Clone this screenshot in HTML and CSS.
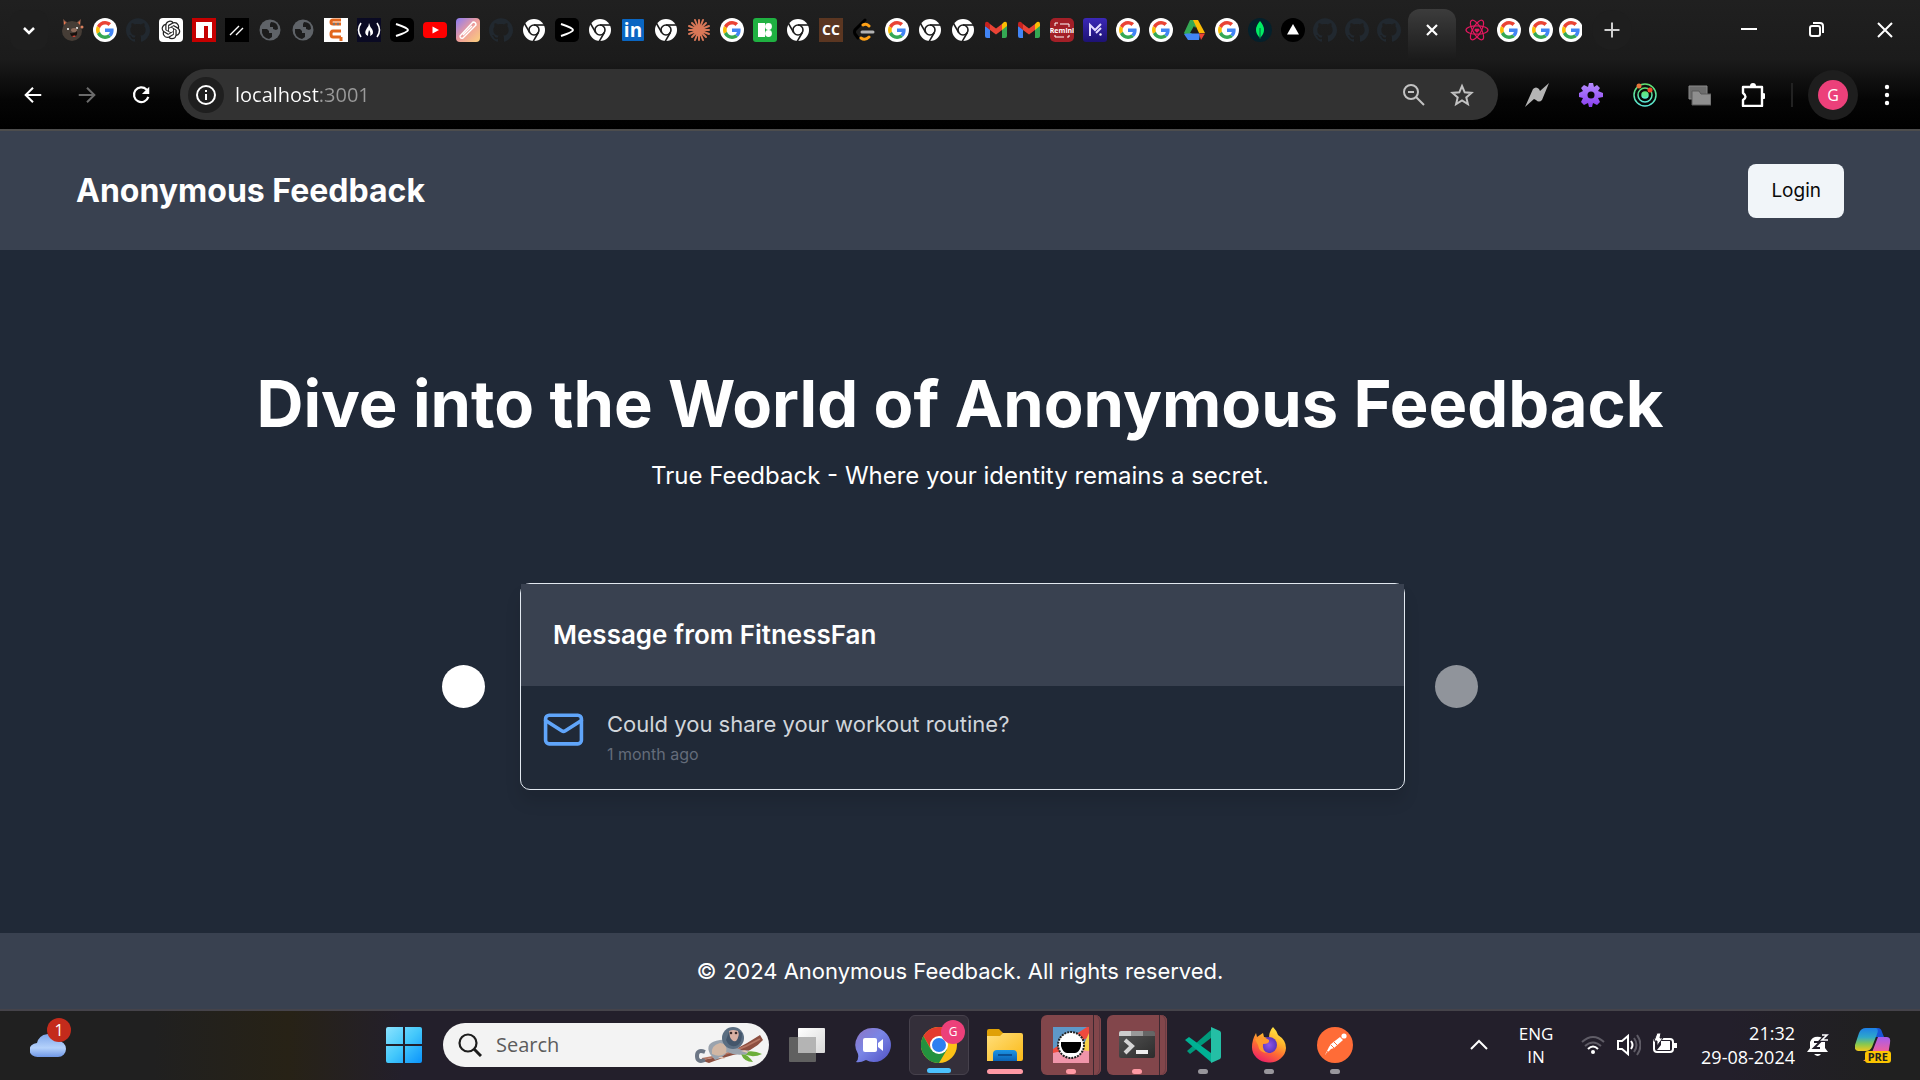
FILE: index.html
```html
<!DOCTYPE html>
<html lang="en">
<head>
<meta charset="utf-8">
<meta name="viewport" content="width=device-width, initial-scale=1">
<title>Anonymous Feedback</title>
<link rel="stylesheet" href="styles.css">
</head>
<body>
<svg class="sprite" aria-hidden="true">
  <defs>
    <linearGradient id="pen-bg" x1="0" y1="0" x2="1" y2="1"><stop offset="0" stop-color="#8a7bf5"/><stop offset=".5" stop-color="#ee9d9b"/><stop offset="1" stop-color="#fbd07c"/></linearGradient>
    <linearGradient id="m-bg" x1="0" y1="0" x2="0" y2="1"><stop offset="0" stop-color="#3b28b8"/><stop offset="1" stop-color="#1d1273"/></linearGradient>
    <linearGradient id="gear-bg" x1="0" y1="0" x2="0" y2="1"><stop offset="0" stop-color="#b68cff"/><stop offset="1" stop-color="#8a3ff0"/></linearGradient>
    <linearGradient id="radar" x1="0" y1="0" x2="0" y2="1"><stop offset="0" stop-color="#5fe070"/><stop offset="1" stop-color="#5ce6d8"/></linearGradient>
    <linearGradient id="win-bg" x1="0" y1="0" x2="1" y2="1"><stop offset="0" stop-color="#8be3ff"/><stop offset=".5" stop-color="#44c8fb"/><stop offset="1" stop-color="#0a93fb"/></linearGradient>
    <linearGradient id="cloud-bg" x1="0" y1="0" x2="0" y2="1"><stop offset="0" stop-color="#7ea6ea"/><stop offset=".6" stop-color="#b5d2fb"/><stop offset="1" stop-color="#6f97e6"/></linearGradient>
    <linearGradient id="chat-bg" x1="0" y1="0" x2="1" y2="1"><stop offset="0" stop-color="#8d74c4"/><stop offset=".45" stop-color="#7a86e6"/><stop offset="1" stop-color="#5050c4"/></linearGradient>
    <linearGradient id="folder-bg" x1="0" y1="0" x2="1" y2="1"><stop offset="0" stop-color="#ffdf7c"/><stop offset="1" stop-color="#fbb916"/></linearGradient>
    <linearGradient id="folder-blue" x1="0" y1="0" x2="0" y2="1"><stop offset="0" stop-color="#1b95e6"/><stop offset="1" stop-color="#0b62b4"/></linearGradient>
    <linearGradient id="term-bg" x1="0" y1="0" x2="1" y2="1"><stop offset="0" stop-color="#555"/><stop offset="1" stop-color="#2c2c2c"/></linearGradient>
    <linearGradient id="fox-bg" x1=".8" y1="0" x2=".3" y2="1"><stop offset="0" stop-color="#fff04a"/><stop offset=".35" stop-color="#ffb62c"/><stop offset=".65" stop-color="#ff6a34"/><stop offset="1" stop-color="#ec1e68"/></linearGradient>
    <radialGradient id="fox-orb"><stop offset="0" stop-color="#9058e8"/><stop offset="1" stop-color="#5a35bd"/></radialGradient>
    <linearGradient id="cop-a" x1="0" y1="0" x2="0" y2="1"><stop offset="0" stop-color="#1d7fe8"/><stop offset=".4" stop-color="#2fa8c9"/><stop offset=".7" stop-color="#86c850"/><stop offset="1" stop-color="#f2c81c"/></linearGradient>
    <linearGradient id="cop-b" x1="0" y1="0" x2="0" y2="1"><stop offset="0" stop-color="#a45cf0"/><stop offset=".6" stop-color="#f0609c"/><stop offset="1" stop-color="#ff8a5c"/></linearGradient>
    <linearGradient id="view-a" x1="0" y1="0" x2="1" y2="1"><stop offset="0" stop-color="#fff"/><stop offset="1" stop-color="#d8d8d8"/></linearGradient>
  </defs>
  <symbol id="g" viewBox="0 0 24 24"><circle cx="12" cy="12" r="12" fill="#fff"/><g transform="translate(3 3) scale(.375)"><path fill="#EA4335" d="M24 9.5c3.54 0 6.71 1.22 9.21 3.6l6.85-6.85C35.9 2.38 30.47 0 24 0 14.62 0 6.51 5.38 2.56 13.22l7.98 6.19C12.43 13.72 17.74 9.5 24 9.5z"/><path fill="#4285F4" d="M46.98 24.55c0-1.57-.15-3.09-.38-4.55H24v9.02h12.94c-.58 2.96-2.26 5.48-4.78 7.18l7.73 6c4.51-4.18 7.09-10.36 7.09-17.65z"/><path fill="#FBBC05" d="M10.53 28.59c-.48-1.45-.76-2.99-.76-4.59s.27-3.14.76-4.59l-7.98-6.19C.92 16.46 0 20.12 0 24c0 3.88.92 7.54 2.56 10.78l7.97-6.19z"/><path fill="#34A853" d="M24 48c6.48 0 11.93-2.13 15.89-5.81l-7.73-6c-2.15 1.45-4.92 2.3-8.16 2.3-6.26 0-11.57-4.22-13.47-9.91l-7.98 6.19C6.51 42.62 14.62 48 24 48z"/></g></symbol>
  <symbol id="gh" viewBox="0 0 24 24"><path fill="#21282f" d="M12 .297c-6.63 0-12 5.373-12 12 0 5.303 3.438 9.8 8.205 11.385.6.113.82-.258.82-.577 0-.285-.01-1.04-.015-2.04-3.338.724-4.042-1.61-4.042-1.61C4.422 18.07 3.633 17.7 3.633 17.7c-1.087-.744.084-.729.084-.729 1.205.084 1.838 1.236 1.838 1.236 1.07 1.835 2.809 1.305 3.495.998.108-.776.417-1.305.76-1.605-2.665-.3-5.466-1.332-5.466-5.93 0-1.31.465-2.38 1.235-3.22-.135-.303-.54-1.523.105-3.176 0 0 1.005-.322 3.3 1.23.96-.267 1.98-.399 3-.405 1.02.006 2.04.138 3 .405 2.28-1.552 3.285-1.23 3.285-1.23.645 1.653.24 2.873.12 3.176.765.84 1.23 1.91 1.23 3.22 0 4.61-2.805 5.625-5.475 5.92.42.36.81 1.096.81 2.22 0 1.606-.015 2.896-.015 3.286 0 .315.21.69.825.57C20.565 22.092 24 17.592 24 12.297c0-6.627-5.373-12-12-12"/></symbol>
  <symbol id="cr" viewBox="0 0 24 24"><circle cx="12" cy="12" r="11" fill="#fff"/><circle cx="12" cy="12" r="5" fill="none" stroke="#1c1c1c" stroke-width="1.600"/><g stroke="#1c1c1c" stroke-width="1.600"><path d="M12 7h11"/><path d="M12 7h11" transform="rotate(120 12 12)"/><path d="M12 7h11" transform="rotate(240 12 12)"/></g></symbol>
  <symbol id="bear" viewBox="0 0 24 24"><path d="M3 1l5 4-4 5zM21 1l-5 4 4 5z" fill="#7a5344"/><path d="M4 3l2 2-2 2zM20 3l-2 2 2 2z" fill="#e8764f"/><circle cx="12" cy="13" r="10" fill="#463d36"/><circle cx="8" cy="11" r="1" fill="#fff"/><circle cx="17" cy="10" r="1" fill="#fff"/><ellipse cx="14" cy="12" rx="3" ry="2" fill="#8c6a5a"/><path d="M10 15q5 1 7-2 1 5-3 6-3 0-4-4z" fill="#17100d"/><path d="M12 18q3-1 4 0-2 2-4 0z" fill="#e04a3b"/><circle cx="22" cy="9" r="1.5" fill="#d9805e"/></symbol>
  <symbol id="oa" viewBox="0 0 24 24"><rect width="24" height="24" rx="4" fill="#fff"/><path transform="translate(2.6 2.6) scale(.78)" fill="#222" d="M22.2819 9.8211a5.9847 5.9847 0 0 0-.5157-4.9108 6.0462 6.0462 0 0 0-6.5098-2.9A6.0651 6.0651 0 0 0 4.9807 4.1818a5.9847 5.9847 0 0 0-3.9977 2.9 6.0462 6.0462 0 0 0 .7427 7.0966 5.98 5.98 0 0 0 .511 4.9107 6.051 6.051 0 0 0 6.5146 2.9001A5.9847 5.9847 0 0 0 13.2599 24a6.0557 6.0557 0 0 0 5.7718-4.2058 5.9894 5.9894 0 0 0 3.9977-2.9001 6.0557 6.0557 0 0 0-.7475-7.0729zm-9.022 12.6081a4.4755 4.4755 0 0 1-2.8764-1.0408l.1419-.0804 4.7783-2.7582a.7948.7948 0 0 0 .3927-.6813v-6.7369l2.02 1.1686a.071.071 0 0 1 .038.052v5.5826a4.504 4.504 0 0 1-4.4945 4.4944zm-9.6607-4.1254a4.4708 4.4708 0 0 1-.5346-3.0137l.142.0852 4.783 2.7582a.7712.7712 0 0 0 .7806 0l5.8428-3.3685v2.3324a.0804.0804 0 0 1-.0332.0615L9.74 19.9502a4.4992 4.4992 0 0 1-6.1408-1.6464zM2.3408 7.8956a4.485 4.485 0 0 1 2.3655-1.9728V11.6a.7664.7664 0 0 0 .3879.6765l5.8144 3.3543-2.0201 1.1685a.0757.0757 0 0 1-.071 0l-4.8303-2.7865A4.504 4.504 0 0 1 2.3408 7.872zm16.5963 3.8558L13.1038 8.364 15.1192 7.2a.0757.0757 0 0 1 .071 0l4.8303 2.7913a4.4944 4.4944 0 0 1-.6765 8.1042v-5.6772a.79.79 0 0 0-.407-.667zm2.0107-3.0231l-.142-.0852-4.7735-2.7818a.7759.7759 0 0 0-.7854 0L9.409 9.2297V6.8974a.0662.0662 0 0 1 .0284-.0615l4.8303-2.7866a4.4992 4.4992 0 0 1 6.6802 4.66zM8.3065 12.863l-2.02-1.1638a.0804.0804 0 0 1-.038-.0567V6.0742a4.4992 4.4992 0 0 1 7.3757-3.4537l-.142.0805L8.704 5.459a.7948.7948 0 0 0-.3927.6813zm1.0976-2.3654l2.602-1.4998 2.6069 1.4998v2.9994l-2.5974 1.4997-2.6067-1.4997Z"/></symbol>
  <symbol id="npm" viewBox="0 0 24 24"><path fill="#c60000" d="M0 0h24v24H0z"/><path fill="#fff" d="M4 4h16v16h-4V8h-4v12H4z"/></symbol>
  <symbol id="slash" viewBox="0 0 24 24"><path d="M0 0h24v24H0z"/><path d="M5 17L14 8M11 17l7-7" stroke="#fff" stroke-width="1.4"/></symbol>
  <symbol id="globe" viewBox="0 0 24 24"><circle cx="12" cy="12" r="10.5" fill="#5f6368"/><path fill="#1c1c1c" d="M4 11h5l2 2v2h3v4l-3 2Q3 19 4 11zM13 4q7 0 7 7l-2 1-3-1V9h-3V6z"/></symbol>
  <symbol id="uc" viewBox="0 0 24 24"><path fill="#fff" d="M0 0h24v24H0z"/><path d="M17 2H9q-2 0-2 2t2 2h8M17 13H9q-2 0-2 3t2 3h8M17 19v4" fill="none" stroke="#e2661c" stroke-width="3"/><circle cx="10" cy="6" r="1.2" fill="#777"/><circle cx="14" cy="6" r="1.2" fill="#777"/></symbol>
  <symbol id="fcc" viewBox="0 0 24 24"><path fill="#0a0a23" d="M0 0h24v24H0z"/><path d="M4 5q-5 7 0 14M20 5q5 7 0 14" fill="none" stroke="#fff" stroke-width="1.6"/><path fill="#fff" d="M12 5q1 4 3 6 3 5-2 7 1-4-1-6-1 3-1 6-5-2-1-8 2-2 2-5z"/></symbol>
  <symbol id="gt" viewBox="0 0 24 24"><rect width="24" height="24" rx="5"/><path d="M6 6q12 4 12 6T6 18" fill="none" stroke="#fff" stroke-width="2"/></symbol>
  <symbol id="yt" viewBox="0 0 24 24"><rect y="4" width="24" height="16" rx="4" fill="#f00"/><path fill="#fff" d="M9.500 8.500L16 12l-6.500 3.500z"/></symbol>
  <symbol id="pen" viewBox="0 0 24 24"><rect width="24" height="24" rx="4" fill="url(#pen-bg)"/><path d="M4 18L17 4q3 0 3 3L7 20q-3 1-3-2zM7 17l9-9" fill="none" stroke="#fff" stroke-width="1.400" stroke-linejoin="round"/></symbol>
  <symbol id="claude" viewBox="0 0 24 24"><g stroke="#d97757" stroke-width="2" stroke-linecap="round"><path d="M12 2v20M2 12h20M5 5l14 14M19 5L5 19M8 2l8 20M16 2L8 22M2 8l20 8M2 16l20-8"/></g></symbol>
  <symbol id="green" viewBox="0 0 24 24"><rect width="24" height="24" rx="3" fill="#1fb141"/><path fill="#fff" d="M5 5h7v14H5z"/><circle cx="15.500" cy="8.500" r="3.400" fill="#fff"/><circle cx="15.500" cy="15.500" r="3.400" fill="#fff"/></symbol>
  <symbol id="lc" viewBox="0 0 24 24"><g fill="none" stroke-width="3" stroke-linecap="round"><path stroke="#000" d="M13 2L3 12q-1 2 0 4l3 4"/><path stroke="#ffa116" d="M11 7q3-2 6 1M9 20q4 3 8-1"/><path stroke="#b3b3b3" d="M10 14h11"/></g></symbol>
  <symbol id="gm" viewBox="0 0 24 24"><path fill="#4285f4" d="M1 8v10q0 2 2 2h3V11z"/><path fill="#34a853" d="M18 11v9h3q2 0 2-2V7z"/><path fill="#ea4335" d="M6 6l6 4.500L18 6v6l-6 4.500L6 12z"/><path fill="#c5221f" d="M1 6q0-3 3-2l2 2v6L1 8z"/><path fill="#fbbc04" d="M18 6l2-2q3-1 3 2v2l-5 4z"/></symbol>
  <symbol id="ml" viewBox="0 0 24 24"><rect width="24" height="24" rx="3" fill="url(#m-bg)"/><path d="M7 18V7l5 5 6-6M13 15l5-5" fill="none" stroke="#e4dcff" stroke-width="2"/><circle cx="17.500" cy="16.500" r="1.200" fill="#fff"/></symbol>
  <symbol id="drive" viewBox="0 0 24 24"><path fill="#34a853" d="M8 2h4l3 5L6 21l-4-6z"/><path fill="#fbbc04" d="M11 2h5l7 13h-6z"/><path fill="#4285f4" d="M5 15.500h13L17 22H6l-4-6z"/><path fill="#ea4335" d="M17 15.500h6L19 22z"/><path fill="#1c1c1c" d="M12 8l4 7H8z"/></symbol>
  <symbol id="mongo" viewBox="0 0 24 24"><circle cx="12" cy="12" r="12" fill="#04202b"/><path fill="#00ed64" d="M12 3q8 9 0 17Q4 12 12 3z"/><path d="M12 10v11" stroke="#04603f"/></symbol>
  <symbol id="tri" viewBox="0 0 24 24"><circle cx="12" cy="12" r="12"/><path fill="#fff" d="M12 6l6 10.500H6z"/></symbol>
  <symbol id="react" viewBox="0 0 24 24"><g fill="none" stroke="#e3175f" stroke-width="1.200"><ellipse cx="12" cy="12" rx="11" ry="4.200"/><ellipse cx="12" cy="12" rx="11" ry="4.200" transform="rotate(60 12 12)"/><ellipse cx="12" cy="12" rx="11" ry="4.200" transform="rotate(120 12 12)"/><path fill="#e3175f" d="M12 14l-2-2 1-1 1 1 1-1 1 1z"/></g></symbol>
</svg>

<header class="browser">
  <div class="strip">
    <button class="tab-search" aria-label="Search tabs"><svg viewBox="0 0 24 24" class="i24"><path d="M7 10l5 5 5-5" fill="none" stroke="#fff" stroke-width="2.500"/></svg></button>
    <nav class="tabs" aria-label="Tabs">
      <a class="tab" href="#"><svg><use href="#bear"/></svg></a>
      <a class="tab" href="#"><svg><use href="#g"/></svg></a>
      <a class="tab" href="#"><svg><use href="#gh"/></svg></a>
      <a class="tab" href="#"><svg><use href="#oa"/></svg></a>
      <a class="tab" href="#"><svg><use href="#npm"/></svg></a>
      <a class="tab" href="#"><svg><use href="#slash"/></svg></a>
      <a class="tab" href="#"><svg><use href="#globe"/></svg></a>
      <a class="tab" href="#"><svg><use href="#globe"/></svg></a>
      <a class="tab" href="#"><svg><use href="#uc"/></svg></a>
      <a class="tab" href="#"><svg><use href="#fcc"/></svg></a>
      <a class="tab" href="#"><svg><use href="#gt"/></svg></a>
      <a class="tab" href="#"><svg><use href="#yt"/></svg></a>
      <a class="tab" href="#"><svg><use href="#pen"/></svg></a>
      <a class="tab" href="#"><svg><use href="#gh"/></svg></a>
      <a class="tab" href="#"><svg><use href="#cr"/></svg></a>
      <a class="tab" href="#"><svg><use href="#gt"/></svg></a>
      <a class="tab" href="#"><svg><use href="#cr"/></svg></a>
      <a class="tab" href="#"><svg viewBox="0 0 24 24"><rect x="1" y="1" width="22" height="22" rx="1" fill="#0a66c2"/><text x="12" y="19" text-anchor="middle" font-size="19" font-weight="700" fill="#fff">in</text></svg></a>
      <a class="tab" href="#"><svg><use href="#cr"/></svg></a>
      <a class="tab" href="#"><svg><use href="#claude"/></svg></a>
      <a class="tab" href="#"><svg><use href="#g"/></svg></a>
      <a class="tab" href="#"><svg><use href="#green"/></svg></a>
      <a class="tab" href="#"><svg><use href="#cr"/></svg></a>
      <a class="tab" href="#"><svg viewBox="0 0 24 24"><path fill="#5b3621" d="M0 0h24v24H0z"/><text x="12" y="17" text-anchor="middle" font-size="14" font-weight="700" fill="#fff">CC</text></svg></a>
      <a class="tab" href="#"><svg><use href="#lc"/></svg></a>
      <a class="tab" href="#"><svg><use href="#g"/></svg></a>
      <a class="tab" href="#"><svg><use href="#cr"/></svg></a>
      <a class="tab" href="#"><svg><use href="#cr"/></svg></a>
      <a class="tab" href="#"><svg><use href="#gm"/></svg></a>
      <a class="tab" href="#"><svg><use href="#gm"/></svg></a>
      <a class="tab" href="#"><svg viewBox="0 0 24 24"><rect width="24" height="24" rx="5" fill="#a31f27"/><path d="M5 8V5h3M10 6h9v3M5 17v2h9M17 19h2v-2" fill="none" stroke="#fff"/><text x="12" y="15" text-anchor="middle" font-size="7" font-weight="700" fill="#fff">Remini</text></svg></a>
      <a class="tab" href="#"><svg><use href="#ml"/></svg></a>
      <a class="tab" href="#"><svg><use href="#g"/></svg></a>
      <a class="tab" href="#"><svg><use href="#g"/></svg></a>
      <a class="tab" href="#"><svg><use href="#drive"/></svg></a>
      <a class="tab" href="#"><svg><use href="#g"/></svg></a>
      <a class="tab" href="#"><svg><use href="#mongo"/></svg></a>
      <a class="tab" href="#"><svg><use href="#tri"/></svg></a>
      <a class="tab tab-near" href="#"><svg><use href="#gh"/></svg></a>
      <a class="tab tab-near" href="#"><svg><use href="#gh"/></svg></a>
      <a class="tab tab-near" href="#"><svg><use href="#gh"/></svg></a>
      <button class="tab-active" aria-label="Close tab"><svg viewBox="0 0 24 24" class="i24"><path d="M7 7l10 10M17 7L7 17" stroke="#fff" stroke-width="2.200"/></svg></button>
      <a class="tab tab-near" href="#"><svg><use href="#react"/></svg></a>
      <a class="tab tab-near" href="#"><svg><use href="#g"/></svg></a>
      <a class="tab tab-near" href="#"><svg><use href="#g"/></svg></a>
      <a class="tab tab-cut" href="#"><svg><use href="#g"/></svg></a>
    </nav>
    <button class="new-tab" aria-label="New tab"><svg viewBox="0 0 24 24" class="i24"><path d="M12 3v18M3 12h18" stroke="#d0d0d0" stroke-width="2.400"/></svg></button>
    <div class="win">
      <button aria-label="Minimise"><svg viewBox="0 0 24 24" class="i24"><path d="M4 11h16" stroke="#fff" stroke-width="2"/></svg></button>
      <button aria-label="Restore"><svg viewBox="0 0 24 24" class="i24" fill="none" stroke="#fff" stroke-width="2"><rect x="5" y="8" width="10" height="10" rx="2"/><path d="M8 5h7q3 0 3 3v7"/></svg></button>
      <button aria-label="Close"><svg viewBox="0 0 24 24" class="i24"><path d="M5 5l14 14M19 5L5 19" stroke="#fff" stroke-width="2"/></svg></button>
    </div>
  </div>
  <div class="toolbar">
    <div class="nav">
      <button aria-label="Back"><svg viewBox="0 0 24 24" class="i24"><path d="M21 12H4M12 4l-8 8 8 8" fill="none" stroke="#fff" stroke-width="2.200"/></svg></button>
      <button aria-label="Forward"><svg viewBox="0 0 24 24" class="i24"><path d="M3 12h17M12 4l8 8-8 8" fill="none" stroke="#6b6b6b" stroke-width="2.200"/></svg></button>
      <button aria-label="Reload"><svg viewBox="0 0 24 24" class="i24"><path d="M20 14a8 8 0 1 1-2-8l2 2" fill="none" stroke="#fff" stroke-width="2.400"/><path d="M21 3v8h-8z" fill="#fff"/></svg></button>
    </div>
    <div class="omnibox">
      <button class="site-info" aria-label="Site information"><svg viewBox="0 0 24 24" class="i24"><circle cx="12" cy="12" r="9" fill="none" stroke="#fff" stroke-width="2"/><path d="M12 11v6M12 7v2" stroke="#fff" stroke-width="2"/></svg></button>
      <input class="url" type="text" value="localhost:3001" aria-label="Address">
      <button aria-label="Zoom"><svg viewBox="0 0 24 24" class="i24" fill="none" stroke="#c2c2c2" stroke-width="2"><circle cx="9" cy="9" r="7"/><path d="M14 14l8 8M6 9h6"/></svg></button>
      <button aria-label="Bookmark"><svg viewBox="0 0 24 24" class="i24"><path d="M12 3l2.700 6.300 6.800.6-5.200 4.500 1.600 6.700L12 17.500l-5.900 3.600 1.600-6.700L2.500 9.900l6.800-.6z" fill="none" stroke="#c2c2c2" stroke-width="2"/></svg></button>
    </div>
    <div class="exts">
      <button aria-label="Extension"><svg viewBox="0 0 24 24" class="i24"><path fill="#b4b4b4" d="M0 24L8 6q3-3 6 0l1 2 9-8-7 17q-3 3-6 0l-2-1z"/></svg></button>
      <button aria-label="Settings extension"><svg viewBox="0 0 24 24" class="i24"><g fill="url(#gear-bg)"><path d="M10 0h4l1 4 3-2 3 3-2 3 5 2v4l-5 1 2 4-3 3-4-2-1 4h-3l-1-4-4 2-3-3 2-4-4-1v-4l4-2-2-3 3-3 4 2z"/></g><circle cx="12" cy="12" r="3.500" fill="#080808"/></svg></button>
      <button aria-label="Radar extension"><svg viewBox="0 0 24 24" class="i24" fill="none" stroke="url(#radar)" stroke-width="1.500"><circle cx="12" cy="12" r="11"/><circle cx="12" cy="12" r="7"/><circle cx="12" cy="12" r="3" fill="#5ee68c"/><circle cx="6" cy="3" r="2.500" fill="#e8763a" stroke="none"/><circle cx="17" cy="7" r="2.500" fill="#ee4b2b" stroke="none"/></svg></button>
      <button aria-label="Windows extension"><svg viewBox="0 0 24 24" class="i24"><path fill="#6d6d6d" stroke="#8a8a8a" d="M2 3h18v13H2z"/><path fill="#8e8e8e" stroke="#5a5a5a" d="M5 8h7l2 3h10v11H5z"/></svg></button>
      <button aria-label="Extensions"><svg viewBox="0 0 24 24" class="i24"><path d="M2 4h19v19H2v-6q5-3 0-7z" fill="none" stroke="#fff" stroke-width="2.400" stroke-linejoin="round"/><path d="M9 3a3 3 0 0 1 6 0zM22 10a3 3 0 0 1 0 6z" fill="#fff"/></svg></button>
    </div>
    <span class="bar-sep"></span>
    <button class="profile" aria-label="Profile"><span>G</span></button>
    <button class="menu" aria-label="Menu"><svg viewBox="0 0 24 24" class="i24" fill="#fff"><circle cx="12" cy="4" r="2.200"/><circle cx="12" cy="12" r="2.200"/><circle cx="12" cy="20" r="2.200"/></svg></button>
  </div>
</header>

<div class="page">
  <header class="site-header">
    <a class="brand" href="#">Anonymous Feedback</a>
    <button class="login">Login</button>
  </header>
  <main class="hero">
    <h1>Dive into the World of Anonymous Feedback</h1>
    <p class="lead">True Feedback - Where your identity remains a secret.</p>
    <section class="carousel" aria-label="Messages">
      <button class="dot" aria-label="Previous message"></button>
      <div class="slide">
        <article class="card">
          <h2>Message from FitnessFan</h2>
          <div class="card-body">
            <svg class="mail" viewBox="0 0 24 24" fill="none" stroke="#60a5fa" stroke-width="2" stroke-linecap="round" stroke-linejoin="round"><rect width="20" height="16" x="2" y="4" rx="2"/><path d="M22 7l-8.970 5.700a1.940 1.940 0 0 1-2.060 0L2 7"/></svg>
            <div>
              <p class="msg">Could you share your workout routine?</p>
              <p class="ago">1 month ago</p>
            </div>
          </div>
        </article>
      </div>
      <button class="dot dot-off" aria-label="Next message" disabled></button>
    </section>
  </main>
  <footer class="site-footer">© 2024 Anonymous Feedback. All rights reserved.</footer>
</div>

<footer class="taskbar">
  <div class="widgets">
    <button class="weather" aria-label="Weather"><svg viewBox="0 0 36 26" width="36" height="26"><path fill="url(#cloud-bg)" d="M8 25a8 7 0 0 1-1-14A11 11 0 0 1 28 9a8 8 0 0 1 0 16z"/></svg><span class="count">1</span></button>
  </div>
  <div class="apps">
    <button class="start" aria-label="Start"><svg viewBox="0 0 36 36" width="36" height="36"><g fill="url(#win-bg)"><path d="M2 0h15v17H0V2q0-2 2-2zM19 0h15q2 0 2 2v15H19zM0 19h17v17H2q-2 0-2-2zM19 19h17v15q0 2-2 2H19z"/></g></svg></button>
    <label class="search">
      <svg viewBox="0 0 24 24" width="24" height="24" fill="none" stroke="#1d1d1d" stroke-width="2.200"><circle cx="10" cy="10" r="8.500"/><path d="M16 16l7 7" stroke-width="3"/></svg>
      <input type="search" placeholder="Search" aria-label="Search">
      <svg viewBox="0 0 70 38" width="70" height="38"><path d="M6 34q20-2 34-10 14-7 26-15l3 5q-10 12-30 15-14 4-24 8z" fill="#8d4f40"/><path d="M8 33q30-4 58-20" stroke="#b57663" stroke-width="2" fill="none"/><path d="M47 28q6-1 12 8-9 0-12-8zM48 27q10-4 20 1-10 5-20-1z" fill="#6cae3a"/><path d="M11 26q-8-3-8 4t8 4" fill="none" stroke="#6c7685" stroke-width="4"/><path d="M16 28q-6-12 10-14 8-1 12 4 8 8 16 6l-1 4q-12 2-20-2-4 6-12 8z" fill="#9aa3ae"/><path d="M18 28q-2-8 8-11 8 0 6 10-6 5-14 1z" fill="#d2b7a4"/><circle cx="39" cy="12" r="11" fill="#5b6e82"/><path d="M32 14q4 9 12 5 4-3 4-12-6-5-13-1z" fill="#44566b"/><path d="M35 5q4-2 9 0 2 5-2 10-4 1-6-4z" fill="#d9b0a3"/><circle cx="37" cy="7" r="1.300" fill="#3b2a2a"/><circle cx="42" cy="7" r="1.300" fill="#3b2a2a"/><path d="M24 32q4-3 7 1zM47 25q6-2 7 2z" fill="#e8c7b6"/></svg>
    </label>
    <button class="app" aria-label="Task view"><svg viewBox="0 0 36 36" width="36" height="36"><rect y="10" width="27" height="25" rx="1" fill="#606060"/><rect x="9" y="1" width="27" height="25" rx="1" fill="url(#view-a)"/><path fill="#b4b4b4" d="M9 10h18v16H9z"/></svg></button>
    <button class="app" aria-label="Chat"><svg viewBox="0 0 36 36" width="36" height="36"><path fill="url(#chat-bg)" d="M18 1a17 17 0 1 1-7 32q-6 3-10 2 3-3 2-8A17 17 0 0 1 18 1z"/><rect x="8" y="11" width="14" height="14" rx="2" fill="#fff"/><path fill="#fff" d="M23 16l5-4v12l-5-4z"/></svg></button>
    <button class="app app-open" aria-label="Browser"><svg viewBox="0 0 36 36" width="36" height="36"><circle cx="18" cy="18" r="18" fill="#fbc116"/><path fill="#e33b2e" d="M2.400 9A18 18 0 0 1 33.600 9H18L10 22z"/><path fill="#23923f" d="M2.400 9A18 18 0 0 0 18 36l8-13.500H10z"/><circle cx="18" cy="18" r="9" fill="#fff"/><circle cx="18" cy="18" r="7" fill="#2d7ff0"/></svg><span class="badge">G</span><i class="mark mark-blue"></i></button>
    <button class="app" aria-label="Files"><svg viewBox="0 0 36 36" width="36" height="36"><path fill="#e0a106" d="M0 4q0-2 2-2h10l4 4h18v8H0z"/><path fill="url(#folder-bg)" d="M0 9h13l3-3h18q2 0 2 2v24q0 2-2 2H0z"/><path fill="url(#folder-blue)" d="M6 34V27q0-4 4-4h16q4 0 4 4v7z"/><path d="M11 28h14" stroke="#0a4f93" stroke-width="2"/></svg><i class="mark mark-pink"></i></button>
    <button class="app app-alert" aria-label="Mask"><svg viewBox="0 0 36 36" width="36" height="36"><path fill="#5e98c8" d="M0 0h36v36H0z"/><path fill="#f04a3e" d="M36 0v10L6 26l-6 0v-4L34 0z"/><path fill="#f7d148" d="M36 6v20l-10 2z"/><path fill="#f095aa" d="M0 26q18-6 36-2v12H0z"/><circle cx="18" cy="18" r="13" fill="#fff" stroke="#222" stroke-width="2" stroke-dasharray="2 1"/><path d="M8 15h20v4q-2 7-6 7h-8q-4 0-6-7z"/></svg><i class="mark mark-pink mark-s"></i></button>
    <button class="app app-alert" aria-label="Terminal"><svg viewBox="0 0 36 36" width="36" height="36"><rect y="4" width="36" height="27" rx="2" fill="url(#term-bg)"/><path fill="#ccc" d="M0 9V6q0-2 2-2h10v5z"/><path fill="#999" d="M12 4h12v5H12z"/><path fill="#666" d="M24 4h10q2 0 2 2v3H24z"/><path d="M6 13l7 6-7 7" fill="none" stroke="#d6d6d6" stroke-width="4"/><path fill="#eee" d="M17 23h12v4H17z"/></svg><i class="mark mark-pink mark-s"></i></button>
    <button class="app" aria-label="Code editor"><svg viewBox="0 0 36 36" width="36" height="36"><path d="M2 24L26 3v8L5 27z" fill="#009a7c"/><path d="M0 13l4-3 22 16v9z" fill="#00b294"/><path fill="#24bfa5" d="M26 0l9 4q1 1 1 2v24q0 1-1 2l-9 4z"/></svg><i class="mark mark-s"></i></button>
    <button class="app" aria-label="Firefox"><svg viewBox="0 0 36 36" width="36" height="36"><path fill="url(#fox-bg)" d="M22 0q4 4 5 8 8 5 8 13a17 15 0 0 1-34-1q0-7 4-14l1 4 6-4 1 4 5 1q0-7 4-11z"/><circle cx="18" cy="18" r="8" fill="url(#fox-orb)"/><path fill="#ff9a2e" d="M4 12q8-4 14 1 1 4-6 4-1 7 5 9-9 0-10-8z"/></svg><i class="mark mark-s"></i></button>
    <button class="app" aria-label="API client"><svg viewBox="0 0 36 36" width="36" height="36"><circle cx="18" cy="18" r="18" fill="#ff6c37"/><circle cx="27" cy="9" r="2.600" fill="#fff"/><path fill="#fff" d="M23 10l3 3-9 8-3 1-6 6 4-8 2-3z"/><path d="M17 15l4 4M14 18l3 3M11 24l-2 4" stroke="#ff6c37"/></svg><i class="mark mark-s"></i></button>
  </div>
  <div class="tray">
    <button aria-label="Hidden icons"><svg viewBox="0 0 24 24" class="i24"><path d="M4 16l8-8 8 8" fill="none" stroke="#fff" stroke-width="2"/></svg></button>
    <button class="lang">ENG<br>IN</button>
    <button class="quick" aria-label="Quick settings">
      <svg viewBox="0 0 24 24" class="i24" fill="none" stroke-width="2"><path d="M1 9q11-10 22 0M4 13q8-7 16 0" stroke="#5f5c66"/><path d="M7 16q5-5 10 0" stroke="#fff"/><circle cx="12" cy="19" r="2" fill="#fff"/></svg>
      <svg viewBox="0 0 24 24" class="i24" fill="none" stroke-width="2"><path d="M1 8h4l6-5v18l-6-5H1zM14 8q3 4 0 8" stroke="#fff"/><path d="M17 5q5 7 0 14M20 2q7 10 0 20" stroke="#5f5c66"/></svg>
      <svg viewBox="0 0 24 24" class="i24"><rect x="1" y="6" width="19" height="13" rx="3" fill="none" stroke="#fff" stroke-width="2"/><path fill="#fff" d="M8 8h9v9H4l4-5zM21 10h3v5h-3z"/><path fill="#fff" stroke="#231f2b" d="M4 0h4L7 5h3L4 13V8H1z"/></svg>
    </button>
    <button class="clock">21:32<br>29-08-2024</button>
    <button aria-label="Notifications"><svg viewBox="0 0 24 24" class="i24"><path fill="#fff" d="M1 19l3-4V9a8 8 0 0 1 15 0v6l3 4zM8 21h7q-3 4-7 0z"/><path d="M8 9h6l-6 6h6" fill="none" stroke="#231f2b" stroke-width="2"/><path d="M16 2h5l-5 5h6" fill="none" stroke="#231f2b" stroke-width="4"/><path d="M16 2h5l-5 5h6" fill="none" stroke="#fff" stroke-width="1.600"/></svg></button>
    <button class="copilot" aria-label="Copilot"><svg viewBox="0 0 36 36" width="36" height="36"><path fill="#1a55d8" d="M14 1h9q3 0 4 4l2 5h-8z"/><path fill="url(#cop-b)" d="M23 10h9q4 0 3 6l-2 12q-1 6-8 6H8l8-6z"/><path fill="url(#cop-a)" d="M11 1h10q3 1 1 6l-5 13q-2 4-6 4H3q-4 0-3-6l4-12q2-5 7-5z"/></svg><span>PRE</span></button>
  </div>
</footer>
</body>
</html>
```
FILE: styles.css
```css
* { box-sizing: border-box; }
body {
  margin: 0;
  min-height: 100vh;
  display: flex;
  flex-direction: column;
  background: #202937;
  color: #fff;
  font-family: Inter, "Liberation Sans", sans-serif;
}
button, input { font: inherit; color: inherit; border: 0; background: none; padding: 0; }
h1, h2, p { margin: 0; }
a { color: inherit; text-decoration: none; }
svg { display: block; flex: none; }
.sprite { position: absolute; width: 0; height: 0; }
.i24 { width: 24px; height: 24px; }

/* Browser frame */
.browser {
  background: linear-gradient(#202020 0, #1b1b1b 60px, #050505 100px, #000 129px);
  border-bottom: 2px solid #4d4d4d;
  font-family: "Open Sans", "Noto Sans", sans-serif;
}
.strip { display: flex; align-items: center; height: 60px; padding-left: 10px; }
.tab-search { width: 38px; height: 40px; margin-right: 7px; border-radius: 12px; background: #1e1e1e; display: grid; place-items: center; }
.tabs { display: flex; align-items: center; }
.tab { width: 33px; height: 40px; display: flex; align-items: center; justify-content: center; }
.tab svg { width: 24px; height: 24px; }
.tab-near { width: 32px; }
.tab-active { width: 48px; height: 51px; margin: 9px 5px 0 3px; padding-bottom: 9px; border-radius: 12px 12px 0 0; background: linear-gradient(#3c3c3c, #1a1a1a); display: grid; place-items: center; }
.tab-cut { width: 23px; margin-left: 2px; justify-content: flex-start; overflow: hidden; }
.new-tab { width: 40px; height: 40px; margin-left: 10px; border-radius: 50%; background: #1e1e1e; display: grid; place-items: center; }
.new-tab svg { width: 20px; height: 20px; }
.win { display: flex; margin-left: auto; padding-right: 1px; }
.win button { width: 68px; height: 60px; display: grid; place-items: center; }
.toolbar { display: flex; align-items: center; height: 69px; padding: 0 11px 0 6px; }
.nav { display: flex; margin-right: 12px; }
.nav button, .exts button { width: 54px; height: 40px; display: grid; place-items: center; }
.nav svg { width: 22px; height: 22px; }
.omnibox { flex: 1; min-width: 0; display: flex; align-items: center; gap: 24px; height: 51px; padding: 0 24px 0 8px; border-radius: 26px; background: #323232; }
.site-info { width: 36px; height: 36px; margin-right: -13px; border-radius: 50%; background: #1f1f1f; display: grid; place-items: center; }
.url {
  flex: 1;
  min-width: 0;
  font-size: 20px;
  line-height: 28px;
  color: transparent;
  background: linear-gradient(90deg, #fff 84px, #9a9a9a 84px);
  background-clip: text;
}
.exts { display: flex; margin-left: 12px; }
.bar-sep { width: 2px; height: 24px; margin: 0 15px 0 11px; background: #222; }
.profile { width: 50px; height: 50px; border-radius: 50%; background: #1e1e1e; display: grid; place-items: center; }
.profile span { width: 30px; height: 30px; border-radius: 50%; background: #ec407a; font-size: 16px; line-height: 30px; }
.menu { width: 44px; height: 40px; margin-left: 7px; display: grid; place-items: center; }

/* Site */
.page { flex: 1; display: flex; flex-direction: column; }
.site-header { display: flex; align-items: center; justify-content: space-between; min-height: 119px; padding: 32px 76px; background: #394150; }
.brand { font-size: 32px; line-height: 44px; font-weight: 700; }
.login { padding: 15px 23px; border-radius: 8px; background: #f1f5f9; color: #0a0a0a; font-size: 19px; line-height: 24px; font-weight: 400; }
.hero { flex: 1; display: flex; flex-direction: column; align-items: center; padding: 121px 32px 143px; }
.hero h1 { font-size: 65px; line-height: 65px; font-weight: 700; text-align: center; }
.lead { margin-top: 22px; font-size: 24px; line-height: 36px; text-align: center; }
.carousel { display: flex; align-items: center; width: 100%; max-width: 1036px; margin-top: 89px; }
.dot { flex: none; width: 43px; height: 43px; border-radius: 50%; background: #fff; }
.dot-off { opacity: .5; }
.slide { flex: 1; min-width: 0; padding: 0 30px 0 35px; }
.card { border: 1px solid #e2e8f0; border-radius: 10px; box-shadow: 0 12px 16px #0000001a; }
.card h2 { padding: 32px; background: #394150; font-size: 26px; line-height: 38px; font-weight: 600; }
.card-body { display: flex; gap: 22px; padding: 22px 21px 21px; }
.mail { width: 43px; height: 43px; }
.msg { color: #d1d5db; font-size: 22px; line-height: 32px; }
.ago { color: #646c7a; font-size: 16px; line-height: 28px; }
.site-footer { padding: 22px; background: #394150; font-size: 22px; line-height: 32px; text-align: center; }

/* Taskbar */
.taskbar {
  display: flex;
  align-items: center;
  height: 71px;
  padding-bottom: 2px;
  border-top: 2px solid #45434a;
  background: linear-gradient(90deg, #202020 8%, #272216 15%, #231f2b 21%, #231f2b 90%, #202020 98%);
  font-family: "Open Sans", "Noto Sans", sans-serif;
}
.widgets { flex: 1; padding-left: 30px; }
.weather { position: relative; display: block; }
.count { position: absolute; top: -14px; left: 17px; width: 24px; height: 24px; border-radius: 50%; background: #c42b1c; font-size: 16px; line-height: 24px; }
.apps { display: flex; align-items: center; gap: 6px; }
.start { margin-right: 15px; }
.search { display: flex; align-items: center; gap: 14px; width: 326px; height: 44px; margin-right: 2px; padding: 0 5px 0 15px; border-radius: 22px; background: #f3f3f3; }
.search input { flex: 1; min-width: 0; color: #5c5c5c; font-size: 20px; line-height: 28px; }
.search input::placeholder { color: #5c5c5c; opacity: 1; }
.app { position: relative; width: 60px; height: 60px; border-radius: 6px; display: grid; place-items: center; }
.app-open { background: #342f3a; border: 1px solid #46414c; }
.app-alert { background: #82464b; }
.app-alert::after { content: ""; position: absolute; top: 0; bottom: 0; right: 0; width: 7px; border-left: 1px solid #3d2830; border-radius: 0 6px 6px 0; box-shadow: inset -1px 0 #82464b, inset -2px 0 #6a3c43; }
.badge { position: absolute; top: 4px; right: 3px; width: 24px; height: 24px; border-radius: 50%; background: #ec407a; font-size: 12px; line-height: 24px; }
.mark { position: absolute; bottom: 1px; left: 12px; right: 12px; height: 5px; border-radius: 3px; background: #98969c; }
.mark-blue { left: 17px; right: 17px; background: #4cc2ff; }
.mark-pink { background: #ff99a4; }
.mark-s { left: 25px; right: 25px; }
.tray { display: flex; align-items: center; padding-left: 102px; padding-right: 29px; font-size: 17px; line-height: 23px; }
.lang { width: 60px; margin-left: 15px; }
.quick { display: flex; gap: 12px; margin-left: 15px; }
.clock { width: 106px; margin: 0 11px 0 12px; font-size: 18px; line-height: 24px; text-align: right; white-space: nowrap; }
.copilot { position: relative; margin-left: 25px; }
.copilot span { position: absolute; right: 0; bottom: 0; padding: 0 3px; border-radius: 3px; background: #fbc400; color: #222; font-size: 11px; line-height: 12px; font-weight: 700; }
```
